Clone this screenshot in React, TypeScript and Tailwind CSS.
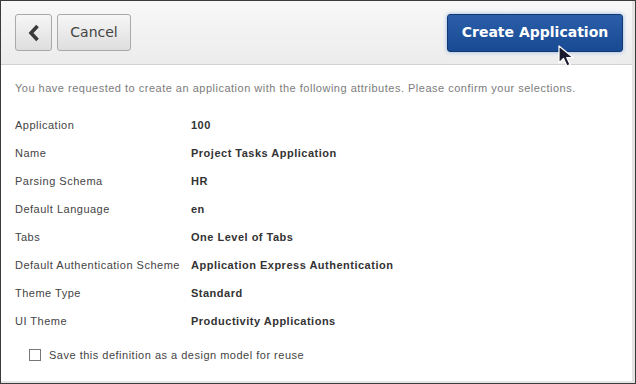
import { useState } from "react";

const rows: [string, string][] = [
  ["Application", "100"],
  ["Name", "Project Tasks Application"],
  ["Parsing Schema", "HR"],
  ["Default Language", "en"],
  ["Tabs", "One Level of Tabs"],
  ["Default Authentication Scheme", "Application Express Authentication"],
  ["Theme Type", "Standard"],
  ["UI Theme", "Productivity Applications"],
];

export default function App() {
  const [saveModel, setSaveModel] = useState(false);

  return (
    <div className="w-[636px] h-[384px] border border-[#3c3c3c] bg-white relative overflow-hidden">
      <div className="h-full border-r-[3px] border-b-[2px] border-[#e4e4e4] flex flex-col">
        {/* toolbar */}
        <div className="h-[64px] shrink-0 flex items-center justify-between pl-[14px] pr-[9px] bg-gradient-to-b from-[#f8f8f8] to-[#ececec] border-b border-[#d2d2d2]">
          <div className="flex items-center gap-[5px]">
            <button className="w-[37px] h-[37px] flex items-center justify-center rounded-[3px] border border-[#a9a9a9] bg-gradient-to-b from-[#f6f6f6] to-[#dedede]">
              <svg width="14" height="18" viewBox="0 0 14 18">
                <path d="M10.5 2 L4 9 L10.5 16" fill="none" stroke="#3a3a3a" strokeWidth="3.6" strokeLinejoin="miter" />
              </svg>
            </button>
            <button className="w-[74px] h-[37px] rounded-[3px] border border-[#a9a9a9] bg-gradient-to-b from-[#f6f6f6] to-[#dedede] text-[#444] text-[14px] font-['DejaVu_Sans',sans-serif]">
              Cancel
            </button>
          </div>
          <button className="w-[176px] h-[38px] rounded-[3px] border border-[#113872] bg-gradient-to-b from-[#2b5ea9] to-[#184a93] text-white text-[14px] font-bold font-['DejaVu_Sans',sans-serif] shadow-[0_0_4px_#8fb2e3]">
            Create Application
          </button>
        </div>

        {/* body */}
        <div className="flex-1 px-[14px] pt-[16px] font-['Liberation_Sans',Arial,sans-serif] tracking-[0.5px]">
          <p className="text-[11px] text-[#7c7c7c] leading-[14px]">
            You have requested to create an application with the following attributes. Please confirm your selections.
          </p>
          <div className="mt-[16px] flex flex-col">
            {rows.map(([label, value]) => (
              <div key={label} className="h-[28px] flex items-center text-[11px]">
                <div className="w-[176px] text-[#444]">{label}</div>
                <div className="font-bold text-[#333]">{value}</div>
              </div>
            ))}
          </div>
          <label className="mt-[12px] ml-[14px] flex items-center gap-[8px] text-[11px] text-[#444]">
            <input
              type="checkbox"
              checked={saveModel}
              onChange={(e) => setSaveModel(e.target.checked)}
              className="appearance-none w-[12px] h-[12px] border border-[#777] bg-white m-0"
            />
            Save this definition as a design model for reuse
          </label>
        </div>
      </div>

      {/* mouse pointer */}
      <svg className="absolute left-[557px] top-[44px]" width="22" height="26" viewBox="0 0 22 26">
        <path d="M1 1 L1 18 L5.5 13.5 L9 21 L12 19.5 L8.7 12.5 L15 12.5 Z" fill="#1a1a2e" stroke="#ffffff" strokeWidth="1.2" strokeLinejoin="round" />
      </svg>
    </div>
  );
}
